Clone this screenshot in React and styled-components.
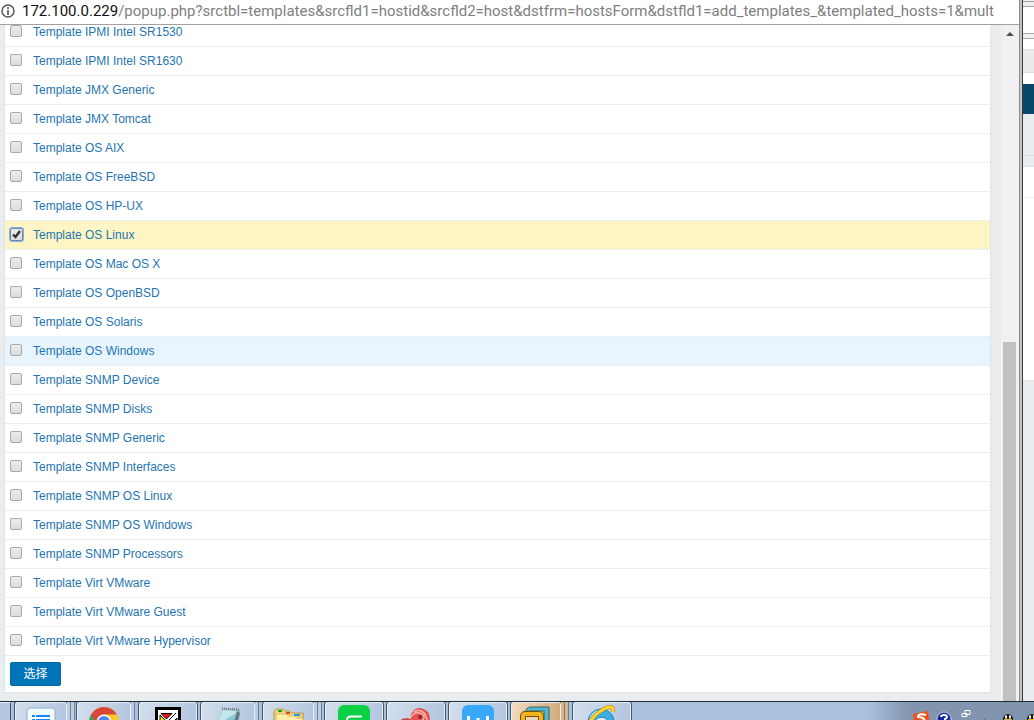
import React from "react";
import styled, { createGlobalStyle, css } from "styled-components";

const GlobalStyle = createGlobalStyle`
  * { box-sizing: border-box; }
  body {
    margin: 0;
    font-family: "Liberation Sans", Arial, "Noto Sans CJK SC", sans-serif;
    font-size: 12px;
    overflow: hidden;
  }
`;

const Desktop = styled.div`
  display: flex;
  flex-direction: column;
  height: 100vh;
  overflow: hidden;
`;

const Windows = styled.div`
  display: flex;
  flex: 1;
  min-height: 0;
`;

const Popup = styled.main`
  display: flex;
  flex-direction: column;
  flex: 1;
  min-width: 0;
`;

const AddressBar = styled.header`
  display: flex;
  align-items: center;
  gap: 7px;
  height: 25px;
  flex: none;
  padding: 0 7px 2px 1px;
  border-bottom: 1px solid #a0a0a0;
  background: #fff;

  svg { flex: none; }
`;

const Address = styled.div`
  flex: 1;
  min-width: 0;
  overflow: hidden;
  white-space: nowrap;
  font-family: Roboto, "Segoe UI", sans-serif;
  font-size: 15px;
  line-height: 22px;
  color: #808080;
`;

const Host = styled.span`
  color: #111;
`;

const Viewport = styled.div`
  display: flex;
  flex: 1;
  min-height: 0;
`;

const Page = styled.section`
  display: flex;
  flex-direction: column;
  justify-content: flex-end;
  flex: 1;
  min-width: 0;
  overflow: hidden;
  padding: 0 10px 8px 4px;
  background: #e9edf0;
`;

const Card = styled.form`
  border: 1px solid #dfe4e7;
  background: #fff;
`;

const List = styled.table`
  width: 100%;
  border-collapse: separate;
  border-spacing: 0;
`;

const rowTone = {
  selected: "#fdf6c4",
  hover: "#e8f5ff",
  plain: "#fff",
};

const Row = styled.tr`
  height: 29px;
  background: ${(p) => rowTone[p.$tone || "plain"]};
`;

const Cell = styled.td`
  padding: 0 5px;
  border-bottom: 1px solid #ebeef0;
  line-height: 28px;
  vertical-align: middle;
`;

const CheckCell = styled(Cell)`
  width: 23px;
  padding-bottom: 2px;
`;

const CheckBox = styled.span`
  display: grid;
  width: 13px;
  height: 13px;

  > * { grid-area: 1 / 1; }
  svg { pointer-events: none; }
`;

const Check = styled.input`
  appearance: none;
  width: 12px;
  height: 12px;
  margin: 0;
  border: 1px solid #a9a9a9;
  border-radius: 2px;
  background: linear-gradient(#ececec, #dcdcdc);

  &:checked {
    width: 13px;
    height: 13px;
    border-color: #6d87ad;
    box-shadow: 0 0 0 1px #86aee2;
  }
`;

const TemplateLink = styled.a`
  color: #1f75b0;
  text-decoration: none;
`;

const Footer = styled.div`
  padding: 6px 5px;
`;

const SelectButton = styled.button`
  display: block;
  width: 51px;
  height: 24px;
  padding: 0;
  border: 1px solid #0268a6;
  border-radius: 2px;
  background: #0275b8;
  color: #fff;
  font-family: "Liberation Sans", "Noto Sans CJK SC", sans-serif;
  font-size: 12px;
  line-height: 22px;
`;

const Scrollbar = styled.div`
  display: flex;
  flex-direction: column;
  width: 18px;
  flex: none;
  padding: 0 3px 0 2px;
  background: #f0f0f0;
`;

const ScrollUp = styled.button`
  display: flex;
  align-items: center;
  justify-content: center;
  height: 18px;
  flex: none;
  padding: 0;
  border: 0;
  background: none;
`;

const ScrollGap = styled.div`
  flex: 299;
`;

const ScrollThumb = styled.div`
  flex: 359;
  background: #c1c1c1;
`;

const WindowEdge = styled.div`
  width: 4px;
  flex: none;
  border-left: 1px solid #8c8c8c;
  border-right: 1px solid #3a3a3a;
  background: #c3c3c3;
`;

const Behind = styled.aside`
  display: flex;
  flex-direction: column;
  width: 11px;
  flex: none;
  background: #e9edf0;
`;

const Band = styled.div`
  height: ${(p) => p.$height}px;
  flex: none;
  background: ${(p) => p.$color};
`;

const Taskbar = styled.footer`
  display: flex;
  height: 19px;
  flex: none;
  overflow: hidden;
  border-top: 1px solid #222c38;
  background: linear-gradient(90deg, #a9c1dd 0, #a9c1dd 84%, #8295ae 88%, #8295ae 100%);
`;

const TaskGroup = styled.div`
  display: flex;
  flex: none;
  width: ${(p) => p.$width}px;
  height: 40px;
`;

const TaskButton = styled.button`
  display: flex;
  justify-content: center;
  align-items: flex-start;
  flex: none;
  width: ${(p) => p.$width}px;
  height: 40px;
  padding: 2px 0 0;
  border: 1px solid #e8eff8;
  border-radius: 2px;
  outline: 1px solid #45566c;
  background: linear-gradient(100deg, #d3deec, #b0c4de);
  ${(p) =>
    p.$warm &&
    css`
      background: linear-gradient(100deg, #f3dcc0, #cda678);
    `}

  svg { flex: none; }
`;

const StackEdge = styled.span`
  width: 4px;
  height: 40px;
  flex: none;
  border-right: 1px solid #6d8098;
  background: ${(p) => (p.$warm ? "#dcb47e" : "#bccce1")};
`;

const PinnedEdge = styled.span`
  width: 11px;
  height: 40px;
  border-top: 1px solid #e8eff8;
  border-right: 1px solid #45566c;
  background: #b4c7df;
`;

const Tray = styled.div`
  display: flex;
  align-items: flex-start;
  margin-left: auto;
  flex: none;
`;

const templates = [
  "IPMI Intel SR1530",
  "IPMI Intel SR1630",
  "JMX Generic",
  "JMX Tomcat",
  "OS AIX",
  "OS FreeBSD",
  "OS HP-UX",
  "OS Linux",
  "OS Mac OS X",
  "OS OpenBSD",
  "OS Solaris",
  "OS Windows",
  "SNMP Device",
  "SNMP Disks",
  "SNMP Generic",
  "SNMP Interfaces",
  "SNMP OS Linux",
  "SNMP OS Windows",
  "SNMP Processors",
  "Virt VMware",
  "Virt VMware Guest",
  "Virt VMware Hypervisor",
].map((name) => "Template " + name);

const tones = { "Template OS Linux": "selected", "Template OS Windows": "hover" };

const bands = [
  [1, "#f0f0f0"], [1, "#a0a0a0"], [4, "#f0f0f0"], [1, "#a5a5a5"],
  [26, "#fff"], [1, "#a5a5a5"], [4, "#f0f0f0"], [1, "#a5a5a5"],
  [10, "#fff"], [1, "#dedede"], [22, "#ebebeb"], [1, "#dedede"],
  [11, "#fff"], [30, "#0a466a"], [41, "#e9edf0"], [1, "#dbe1e5"],
  [10, "#e9edf0"], [1, "#dbe1e5"], [30, "#fff"], [1, "#ebeef0"],
  [182, "#fff"], [1, "#dfe4e7"],
];

const Icon = ({ children }) => (
  <svg width="32" height="32" viewBox="0 0 32 32" aria-hidden="true">{children}</svg>
);

const icons = {
  list: (
    <Icon>
      <rect x="2" y="3" width="28" height="28" rx="3" fill="#f2f9ff" stroke="#8fb0cc" />
      <path d="M7 11h3M7 15h3M7 19h3" stroke="#1287f5" strokeWidth="2" />
      <path d="M11 11h14M11 15h14M11 19h14" stroke="#1287f5" strokeWidth="2" />
    </Icon>
  ),
  chrome: (
    <Icon>
      <circle cx="16" cy="17" r="15" fill="#fbc926" />
      <path d="M16 17L3 9.500A15 15 0 0 0 13 31.700Z" fill="#31a552" />
      <path d="M3 9.500A15 15 0 0 1 29 9.500H16L9 20Z" fill="#d9473a" />
      <circle cx="16" cy="17" r="7.500" fill="#fff" />
      <circle cx="16" cy="17" r="6" fill="#4687f4" />
    </Icon>
  ),
  xmanager: (
    <Icon>
      <rect x="3" y="2" width="26" height="28" fill="#000" />
      <rect x="6" y="5" width="20" height="22" fill="#fff" />
      <path d="M9 8.500H20L14.500 14Z" fill="#f01515" stroke="#000" />
      <path d="M8 10L13 15L8 20Z" fill="#ffdf20" stroke="#000" />
      <path d="M25 13V20L21 17Z" fill="#19c8d2" stroke="#000" />
      <path d="M24 8L9 23" stroke="#000" />
    </Icon>
  ),
  notepad: (
    <Icon>
      <path d="M11 4L28 5L22 30L0 25Z" fill="#8cb8c4" />
      <path d="M11 5L25 6L19 27L2 22Z" fill="#c3e6eb" />
      <path d="M25 6L28 8L23 30L19 27Z" fill="#63777f" />
      <path d="M10 3.500L28 4.500" stroke="#68767c" strokeWidth="2" strokeDasharray="1 1" />
      <path d="M24 8L2 22L19 27Z" fill="#60b3c4" opacity=".6" />
    </Icon>
  ),
  folder: (
    <Icon>
      <path d="M1 30V7L3 4H10L12 6H17L19 8H30L31 30Z" fill="#f0d57c" stroke="#b99847" />
      <path d="M3 9H13L15 11H22L24 13H30V30H3Z" fill="#ffedaa" stroke="#d8b965" />
      <path d="M5 6h4" stroke="#16a51b" strokeWidth="2" />
      <path d="M13 8h4" stroke="#d14a27" strokeWidth="2" />
      <path d="M21 10h6" stroke="#2597e6" strokeWidth="2" />
    </Icon>
  ),
  evernote: (
    <Icon>
      <rect x="0" y="0" width="32" height="32" rx="6" fill="#0bd146" />
      <path d="M24 11.500H13Q9 11.500 9 15V20H24" fill="none" stroke="#fff" strokeWidth="2" />
    </Icon>
  ),
  shell: (
    <Icon>
      <path d="M10 12Q13 3 20 3Q30 4 30 15L27 27H12Z" fill="#e85050" />
      <path d="M10 13Q15 5 22 9Q26 12 22 16M14 7Q24 2 27 15" fill="none" stroke="#ffb3aa" strokeWidth="1.500" />
      <circle cx="20" cy="12" r="2" fill="#8d2732" />
      <path d="M1 14L8 13L14 17L10 24Z" fill="#cc4444" />
    </Icon>
  ),
  wiz: (
    <Icon>
      <rect x="0" y="0" width="32" height="32" rx="6" fill="#38a8fa" />
      <path d="M6.500 11V21H12M25.500 11V21H20M16 13v8" fill="none" stroke="#fff" strokeWidth="3" />
    </Icon>
  ),
  vmware: (
    <Icon>
      <path d="M5 8Q6 2 11 2H29V19H23" fill="#57b8cb" stroke="#2b6570" />
      <rect x="10" y="6" width="14" height="15" fill="#e9d6b5" stroke="#2b6570" />
      <rect x="3" y="9" width="18" height="18" rx="2" fill="#e9d6b5" stroke="#76500b" strokeWidth="6" />
      <rect x="3" y="9" width="18" height="18" rx="2" fill="none" stroke="#f3b31d" strokeWidth="4" />
    </Icon>
  ),
  explorer: (
    <Icon>
      <circle cx="15" cy="17" r="13" fill="#3baee5" stroke="#207eb5" />
      <path d="M9 16a7 6 0 0 1 13 0Z" fill="#d8f1fb" stroke="#1f83b9" />
      <path d="M4 17Q5 8 14 6" fill="none" stroke="#9be8ff" strokeWidth="3" />
      <path d="M2 21Q7 9 20 3Q28 0 27 7" fill="none" stroke="#b27e12" strokeWidth="4" />
      <path d="M2 21Q7 9 20 3Q28 0 27 7" fill="none" stroke="#ffd52f" strokeWidth="3" />
    </Icon>
  ),
};

const tasks = [
  { icon: "list", label: "Tasks", button: 52, slot: 62, stack: 2 },
  { icon: "chrome", label: "Chrome", button: 54, slot: 62, stack: 1 },
  { icon: "xmanager", label: "Xmanager", button: 58, slot: 62 },
  { icon: "notepad", label: "Notepad", button: 54, slot: 62, stack: 1 },
  { icon: "folder", label: "Folders", button: 51, slot: 62, stack: 2 },
  { icon: "evernote", label: "Notes", button: 58, slot: 62 },
  { icon: "shell", label: "Xshell", button: 58, slot: 62 },
  { icon: "wiz", label: "WizNote", button: 58, slot: 62 },
  { icon: "vmware", label: "VMware", button: 50, slot: 62, stack: 2, warm: true },
  { icon: "explorer", label: "Internet Explorer", button: 58, slot: 62 },
];

const Penguin = ({ x }) => (
  <g transform={`translate(${x} 0)`}>
    <circle cx="6" cy="17" r="5" fill="#181818" />
    <ellipse cx="4" cy="15" rx="1" ry="2" fill="#fff" />
    <ellipse cx="8" cy="15" rx="1" ry="2" fill="#fff" />
    <path d="M2 18h8" stroke="#f2b61d" strokeWidth="2" />
  </g>
);

function TrayIcons() {
  return (
    <svg width="122" height="18" viewBox="0 0 122 18" aria-hidden="true">
      <path d="M1 12L16 9L18 24L3 25Z" fill="#f4511e" />
      <path d="M14 13Q6 11 6 15Q12 15 13 19" fill="none" stroke="#fff" strokeWidth="2" />
      <circle cx="32" cy="17" r="7" fill="#1428a2" stroke="#c4cee0" />
      <path d="M29 15q0-2 3-2t3 2q0 1-2 2v2" fill="none" stroke="#fff" strokeWidth="2" />
      <path d="M53 8.500h5v4h-5zM50 11.500h5v3h-5z" fill="#8295ae" stroke="#fff" />
      <path d="M71 18l2-2 2 2" fill="#6d819b" />
      <Penguin x={90} />
      <Penguin x={114} />
    </svg>
  );
}

function TemplateRow({ name }) {
  const tone = tones[name];
  const id = name.replace(/ /g, "-").toLowerCase();
  return (
    <Row $tone={tone}>
      <CheckCell>
        <CheckBox>
          <Check type="checkbox" defaultChecked={tone === "selected"} aria-labelledby={id} />
          {tone === "selected" && (
            <svg width="13" height="13" viewBox="0 0 13 13" aria-hidden="true">
              <path d="M3 6.500L5.500 9L10 3" fill="none" stroke="#333" strokeWidth="2.400" />
            </svg>
          )}
        </CheckBox>
      </CheckCell>
      <Cell>
        <TemplateLink id={id} href="#">{name}</TemplateLink>
      </Cell>
    </Row>
  );
}

export default function App() {
  return (
    <Desktop>
      <GlobalStyle />
      <Windows>
        <Popup>
          <AddressBar>
            <svg width="14" height="14" viewBox="0 0 14 14" aria-hidden="true">
              <circle cx="7" cy="7" r="6" fill="none" stroke="#555" strokeWidth="1.500" />
              <path d="M7 6v5M7 3v2" stroke="#555" strokeWidth="1.600" />
            </svg>
            <Address>
              <Host>172.100.0.229</Host>
              /popup.php?srctbl=templates&amp;srcfld1=hostid&amp;srcfld2=host&amp;dstfrm=hostsForm&amp;dstfld1=add_templates_&amp;templated_hosts=1&amp;mult
            </Address>
          </AddressBar>
          <Viewport>
            <Page>
              <Card>
                <List>
                  <tbody>
                    {templates.map((name) => <TemplateRow key={name} name={name} />)}
                  </tbody>
                </List>
                <Footer>
                  <SelectButton type="button">选择</SelectButton>
                </Footer>
              </Card>
            </Page>
            <Scrollbar>
              <ScrollUp type="button" aria-label="Scroll up">
                <svg width="8" height="4" viewBox="0 0 8 4"><path d="M0 4L4 0L8 4Z" fill="#505050" /></svg>
              </ScrollUp>
              <ScrollGap />
              <ScrollThumb />
            </Scrollbar>
          </Viewport>
        </Popup>
        <WindowEdge />
        <Behind>
          {bands.map(([height, color], i) => <Band key={i} $height={height} $color={color} />)}
        </Behind>
      </Windows>
      <Taskbar>
        <TaskGroup $width={15}>
          <PinnedEdge />
        </TaskGroup>
        {tasks.map((t) => (
          <TaskGroup key={t.icon} $width={t.slot}>
            <TaskButton type="button" aria-label={t.label} $width={t.button} $warm={t.warm}>
              {icons[t.icon]}
            </TaskButton>
            {Array.from({ length: t.stack || 0 }, (_, i) => <StackEdge key={i} $warm={t.warm} />)}
          </TaskGroup>
        ))}
        <Tray>
          <TrayIcons />
        </Tray>
      </Taskbar>
    </Desktop>
  );
}
